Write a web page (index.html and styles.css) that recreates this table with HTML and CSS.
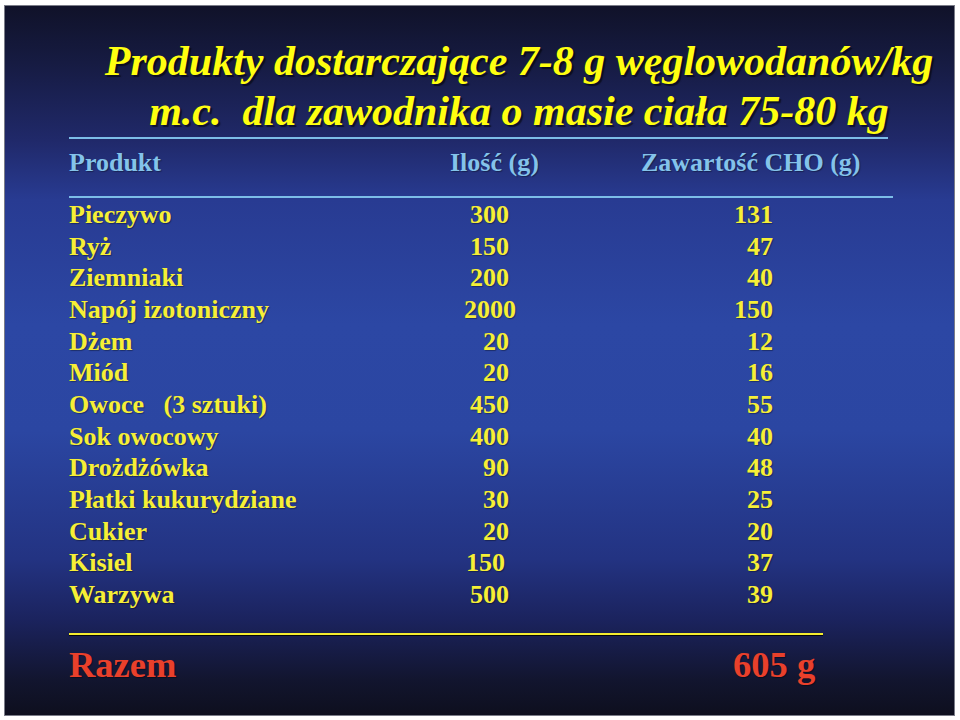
FILE: index.html
```html
<!DOCTYPE html>
<html lang="pl">
<head>
<meta charset="utf-8">
<title>Produkty dostarczające węglowodanów</title>
<link rel="stylesheet" href="styles.css">
</head>
<body>
<div class="slide">
  <h1 class="title">
    <span class="title-line">Produkty dostarczające 7-8 g węglowodanów/kg</span>
    <span class="title-line">m.c.&nbsp; dla zawodnika o masie ciała 75-80 kg</span>
  </h1>
  <div class="content">
    <div class="rule rule-title"></div>
    <div class="head">
      <span>Produkt</span>
      <span>Ilość (g)</span>
      <span>Zawartość CHO (g)</span>
    </div>
    <div class="rule rule-head"></div>
    <div class="rows">
      <span class="name">Pieczywo</span><span class="qty">300</span><span class="cho">131</span>
      <span class="name">Ryż</span><span class="qty">150</span><span class="cho">47</span>
      <span class="name">Ziemniaki</span><span class="qty">200</span><span class="cho">40</span>
      <span class="name">Napój izotoniczny</span><span class="qty wide">2000</span><span class="cho">150</span>
      <span class="name">Dżem</span><span class="qty">20</span><span class="cho">12</span>
      <span class="name">Miód</span><span class="qty">20</span><span class="cho">16</span>
      <span class="name">Owoce&nbsp;&nbsp; (3 sztuki)</span><span class="qty">450</span><span class="cho">55</span>
      <span class="name">Sok owocowy</span><span class="qty">400</span><span class="cho">40</span>
      <span class="name">Drożdżówka</span><span class="qty">90</span><span class="cho">48</span>
      <span class="name">Płatki kukurydziane</span><span class="qty">30</span><span class="cho">25</span>
      <span class="name">Cukier</span><span class="qty">20</span><span class="cho">20</span>
      <span class="name">Kisiel</span><span class="qty short">150</span><span class="cho">37</span>
      <span class="name">Warzywa</span><span class="qty">500</span><span class="cho">39</span>
    </div>
    <div class="rule rule-sum"></div>
    <div class="sum">
      <span>Razem</span>
      <span>605 g</span>
    </div>
  </div>
</div>
</body>
</html>
```

FILE: styles.css
```css
html, body {
  margin: 0;
  padding: 0;
  background: #ffffff;
}

body {
  font-family: "Liberation Serif", "Times New Roman", serif;
}

.slide {
  box-sizing: border-box;
  margin: 5px 0 0 4px;
  width: 951px;
  height: 711px;
  border: 1px solid #7a7c88;
  background: linear-gradient(to bottom,
    #101229 0%,
    #161b42 8%,
    #20296a 19%,
    #283b92 27.4%,
    #2c47a4 45%,
    #2b46a2 60%,
    #233382 78%,
    #1b235e 86.5%,
    #12152f 95%,
    #0e0f1e 100%);
  overflow: hidden;
}

.title {
  margin: 30px 0 0 79px;
  font-size: 42px;
  font-weight: bold;
  font-style: italic;
  line-height: 50px;
  color: #ffff10;
  text-align: center;
  text-shadow: 2px 2px 1px rgba(0, 0, 0, 0.55);
}

.title-line {
  display: block;
  white-space: nowrap;
}

.content {
  padding-left: 64px;
}

.rule {
  height: 2px;
}

.rule-title {
  margin-top: 1px;
  width: 819px;
  background: #7cbde8;
}

.rule-head {
  width: 824px;
  background: #7cbde8;
}

.head {
  display: grid;
  grid-template-columns: 381px 191px auto;
  margin-top: 8px;
  height: 49px;
  font-size: 26px;
  font-weight: bold;
  line-height: 32px;
  color: #84c3ea;
  text-shadow: 1px 1px 1px rgba(0, 0, 0, 0.35);
}

.rows {
  display: grid;
  grid-template-columns: 360px 80px 264px;
  margin-top: 1px;
  font-size: 26px;
  font-weight: bold;
  line-height: 31.67px;
  color: #f6ef36;
  text-shadow: 1px 1px 1px rgba(0, 0, 0, 0.35);
}

.name {
  white-space: nowrap;
}

.qty,
.cho {
  text-align: right;
}

.qty.wide {
  margin-right: -7px;
}

.qty.short {
  margin-right: 4px;
}

.rule-sum {
  margin-top: 22px;
  width: 754px;
  background: #f4ec2e;
  box-shadow: 0 1px 0 #05060c;
}

.sum {
  display: grid;
  grid-template-columns: 664px auto;
  margin-top: 10px;
  font-size: 36.5px;
  font-weight: bold;
  line-height: 40px;
  color: #e9402b;
  text-shadow: 1px 1px 1px rgba(0, 0, 0, 0.4);
}
```
